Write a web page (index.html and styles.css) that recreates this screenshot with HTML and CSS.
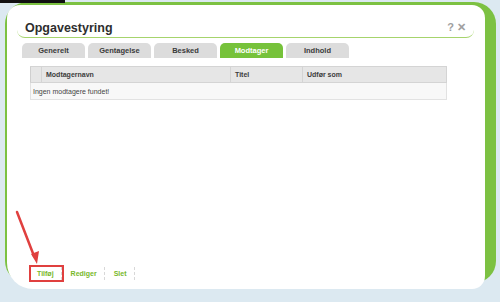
FILE: index.html
```html
<!DOCTYPE html>
<html>
<head>
    <title>Opgavestyring</title>
    <meta charset="utf-8">
    <link rel="stylesheet" href="styles.css">
</head>
<body>
    <div class="topbar"></div>
    <div class="frame">
        <div class="dialog">
            <div class="dialog-header">
                <h1>Opgavestyring</h1>
                <div class="dialog-tools"><span>?</span><span>✕</span></div>
            </div>
            <div class="tabs">
                <div class="tab">Generelt</div>
                <div class="tab">Gentagelse</div>
                <div class="tab">Besked</div>
                <div class="tab active">Modtager</div>
                <div class="tab">Indhold</div>
            </div>
            <table class="grid">
                <thead>
                    <tr>
                        <th class="col-check"></th>
                        <th class="col-name">Modtagernavn</th>
                        <th class="col-title">Titel</th>
                        <th>Udfør som</th>
                    </tr>
                </thead>
                <tbody>
                    <tr>
                        <td colspan="4">Ingen modtagere fundet!</td>
                    </tr>
                </tbody>
            </table>
            <div class="actions">
                <a class="action highlight">Tilføj</a>
                <a class="action">Rediger</a>
                <a class="action">Slet</a>
            </div>
        </div>
    </div>
    <svg class="arrow" width="50" height="60" viewBox="0 0 50 60">
        <line x1="17" y1="212" x2="34" y2="256" transform="translate(0,-205)" stroke="#e0403f" stroke-width="2.5" stroke-linecap="round"/>
        <polygon points="37,264 31,254 39,251" transform="translate(0,-205)" fill="#e0403f"/>
    </svg>
</body>
</html>
```

FILE: styles.css
```css
body {
    margin: 0;
    height: 302px;
    overflow: hidden;
    background: #dce9f1;
    font-family: 'Liberation Sans', Arial, sans-serif;
    color: #333;
}
.topbar {
    position: absolute;
    left: 0;
    top: 0;
    width: 65px;
    height: 3px;
    background: #111;
}
.frame {
    margin: 2px 4px 0 5px;
    height: 281px;
    background: #7cc142;
    border-radius: 22px;
    padding: 3px 11px 0 2px;
    box-sizing: border-box;
}
.dialog {
    height: 284px;
    background: #fff;
    border-radius: 13px 13px 13px 26px;
    display: flex;
    flex-direction: column;
}
.dialog-header {
    display: flex;
    align-items: center;
    height: 33px;
    box-sizing: border-box;
    margin: 0 11px 0 10px;
    padding: 13px 8px 0 8px;
    border-bottom: 1px solid #a6d46c;
    border-radius: 0 0 8px 8px;
}
h1 {
    margin: 0;
    font-size: 12.5px;
    font-weight: bold;
    color: #2e2e2e;
}
.dialog-tools {
    margin-left: auto;
    display: flex;
    gap: 3px;
    font-size: 11px;
    font-weight: bold;
    color: #a0a0a0;
}
.tabs {
    display: flex;
    gap: 3px;
    margin: 5px 0 0 15px;
}
.tab {
    width: 63px;
    height: 15px;
    line-height: 16px;
    text-align: center;
    background: #dcdcdc;
    border-radius: 5px 5px 0 0;
    font-size: 7.5px;
    font-weight: bold;
    color: #3a3a3a;
}
.tab.active {
    background: #76c23a;
    color: #fff;
}
.grid {
    margin: 8px 0 0 23px;
    width: 417px;
    border-collapse: collapse;
    font-size: 7px;
}
.grid th {
    height: 15px;
    padding: 0 0 0 4px;
    background: #e6e6e6;
    border: 1px solid #d4d4d4;
    border-left: 1px solid #cfcfcf;
    text-align: left;
    font-weight: bold;
    color: #3c3c3c;
}
.grid .col-check {
    width: 6px;
}
.grid .col-name {
    width: 184px;
}
.grid .col-title {
    width: 67px;
}
.grid td {
    height: 16px;
    padding: 0 0 0 2px;
    background: #f8f8f8;
    border: 1px solid #e2e2e2;
    color: #444;
}
.actions {
    margin-top: auto;
    display: flex;
    padding: 0 0 9px 24px;
}
.action {
    height: 13px;
    line-height: 14px;
    padding: 0 7px 0 9px;
    border-right: 1px dashed #d8d8d8;
    font-size: 7px;
    font-weight: bold;
    color: #78b82a;
}
.action.highlight {
    padding-left: 6px;
    outline: 2px solid #e0403f;
}
.arrow {
    position: absolute;
    left: 0;
    top: 205px;
}
```
